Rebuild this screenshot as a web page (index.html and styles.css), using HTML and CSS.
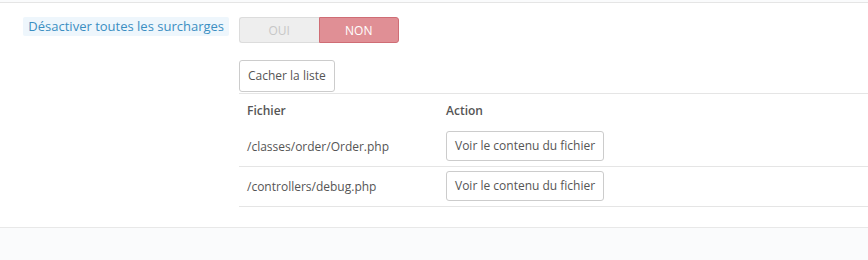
FILE: index.html
```html
<!DOCTYPE html>
<html lang="fr">
<head>
    <meta charset="UTF-8">
    <title>Surcharges</title>
    <link rel="stylesheet" href="styles.css">
</head>
<body>
    <div class="panel">
        <div class="form-row">
            <div class="control-label">
                <span class="label-tooltip">Désactiver toutes les surcharges</span>
            </div>
            <div class="control">
                <div class="switch">
                    <span class="switch-opt">OUI</span>
                    <span class="switch-opt active">NON</span>
                </div>
            </div>
        </div>

        <div class="form-row">
            <div class="control-label"></div>
            <div class="control">
                <button class="btn">Cacher la liste</button>
                <table class="overrides">
                    <thead>
                        <tr>
                            <th class="col-file">Fichier</th>
                            <th>Action</th>
                        </tr>
                    </thead>
                    <tbody>
                        <tr>
                            <td>/classes/order/Order.php</td>
                            <td><button class="btn btn-row">Voir le contenu du fichier</button></td>
                        </tr>
                        <tr>
                            <td>/controllers/debug.php</td>
                            <td><button class="btn btn-row">Voir le contenu du fichier</button></td>
                        </tr>
                    </tbody>
                </table>
            </div>
        </div>
    </div>
    <div class="page-bottom"></div>
</body>
</html>
```

FILE: styles.css
```css
* {
    margin: 0;
    padding: 0;
    box-sizing: border-box;
}

body {
    font-family: 'Open Sans', 'Liberation Sans', sans-serif;
    font-size: 12px;
    color: #555;
    background: #fafbfc;
}

.panel {
    background: #fff;
    margin-top: 2px;
    border-top: 1px solid #e5e5e5;
    border-bottom: 1px solid #e8e8e8;
    padding: 13px 0 20px;
}

.form-row {
    display: grid;
    grid-template-columns: 239px 1fr;
}

.form-row + .form-row {
    margin-top: 17px;
}

.control-label {
    text-align: right;
    padding-right: 10px;
}

.label-tooltip {
    display: inline-block;
    background: #eef6fc;
    color: #3b8ec2;
    font-size: 13px;
    line-height: 19px;
    padding: 0 5px;
    border-radius: 2px;
    margin-top: 1px;
}

.switch {
    display: flex;
    width: 160px;
    height: 26px;
    margin-top: 1px;
}

.switch-opt {
    flex: 1;
    display: flex;
    align-items: center;
    justify-content: center;
    background: #eee;
    border: 1px solid #dcdcdc;
    border-right: none;
    border-radius: 3px 0 0 3px;
    color: #c7c7c7;
    font-size: 12px;
}

.switch-opt.active {
    background: #e08f95;
    border: 1px solid #cf6d75;
    border-radius: 0 3px 3px 0;
    color: #fff;
}

.btn {
    font-family: inherit;
    font-size: 12px;
    color: #555;
    background: #fff;
    border: 1px solid #ccc;
    border-radius: 3px;
    padding: 0 8px;
    height: 32px;
    line-height: 30px;
    cursor: pointer;
}

.overrides {
    width: 100%;
    border-collapse: collapse;
    margin-top: 1px;
}

.overrides th,
.overrides td {
    text-align: left;
    padding: 0 8px;
}

.overrides th {
    font-weight: 600;
    height: 33px;
    padding-top: 1px;
    border-top: 1px solid #e5e5e5;
}

.overrides td {
    height: 40px;
    border-bottom: 1px solid #e5e5e5;
}

.overrides th.col-file {
    width: 199px;
}

.btn-row {
    height: 30px;
    line-height: 28px;
    margin-top: -1px;
}

.page-bottom {
    height: 40px;
}
```
